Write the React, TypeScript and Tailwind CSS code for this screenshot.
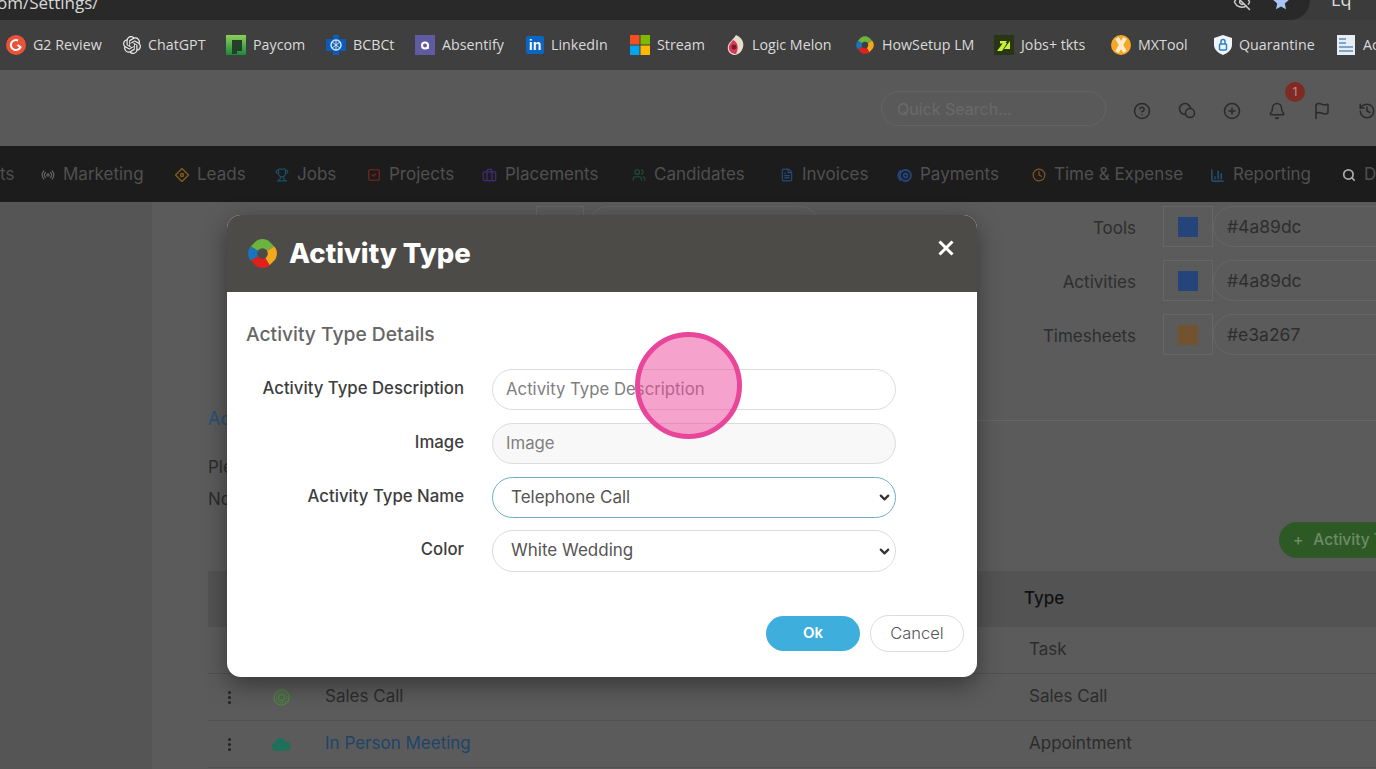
import { ReactNode } from "react"
import {
  BarChart3,
  Bell,
  Briefcase,
  CircleHelp,
  CirclePlus,
  Clock,
  EyeOff,
  FileText,
  Flag,
  History,
  Radio,
  Search,
  SquareCheck,
  Trophy,
  Users,
  ChevronDown,
} from "lucide-react"
import { SiOpenai } from "react-icons/si"

function SwirlLogo({ className, hole }: { className: string; hole: string }) {
  return (
    <svg viewBox="2 2 28 28" className={className}>
      <path d="M6 10 L10 6 C13 3 19 3 22 6 L26 10 L16 16Z" fill="#6cb33f" />
      <path d="M26 10 C29 13 29 19 26 22 L22 26 L16 16Z" fill="#f4a81d" />
      <path d="M22 26 C19 29 13 29 10 26 L6 22 L16 16Z" fill="#e0201c" />
      <path d="M6 22 C3 19 3 13 6 10 L16 16Z" fill="#1b75bc" />
      <circle cx="16" cy="16" r="4.500" fill={hole} />
    </svg>
  )
}

const bookmarks: { label: string; width: string; icon: ReactNode }[] = [
  {
    label: "G2 Review",
    width: "w-[117px]",
    icon: (
      <svg viewBox="0 0 20 20" className="h-5 w-5">
        <circle cx="10" cy="10" r="10" fill="#e8533a" />
        <path d="M12 5.500 A5 5 0 1 0 14.500 12 L11.500 10" fill="none" stroke="#fff" strokeWidth="2" />
      </svg>
    ),
  },
  {
    label: "ChatGPT",
    width: "w-[103px]",
    icon: <SiOpenai className="h-[18px] w-[18px] text-[#eee]" />,
  },
  {
    label: "Paycom",
    width: "w-[100px]",
    icon: (
      <svg viewBox="0 0 20 20" className="h-5 w-5">
        <defs>
          <linearGradient id="paycom" x1="0" y1="0" x2="0" y2="1">
            <stop offset="0" stopColor="#8fce5a" />
            <stop offset="1" stopColor="#1a8a3c" />
          </linearGradient>
        </defs>
        <rect width="20" height="20" fill="url(#paycom)" />
        <path d="M6 5 H16 V16 H11 V19 H6Z" fill="#24402a" />
      </svg>
    ),
  },
  {
    label: "BCBCt",
    width: "w-[89px]",
    icon: (
      <svg viewBox="0 0 20 20" className="h-5 w-5">
        <path d="M7 0 H13 V4 H20 V16 H13 V20 H7 V16 H0 V4 H7Z" fill="#0f5cb8" />
        <circle cx="10" cy="10" r="5" fill="none" stroke="#cfe2f8" strokeWidth="1.500" />
        <path d="M6 7 L14 13 M14 7 L6 13 M10 5 V15" stroke="#cfe2f8" strokeWidth="1" />
      </svg>
    ),
  },
  {
    label: "Absentify",
    width: "w-[111px]",
    icon: (
      <svg viewBox="0 0 20 20" className="h-5 w-5">
        <rect width="20" height="20" fill="#5f5aa2" />
        <circle cx="10" cy="10.500" r="3" fill="none" stroke="#fff" strokeWidth="2" />
        <path d="M13 9 V14" stroke="#fff" strokeWidth="1.500" />
      </svg>
    ),
  },
  {
    label: "LinkedIn",
    width: "w-[104px]",
    icon: (
      <div className="flex h-[18px] w-[18px] items-center justify-center rounded-[2px] bg-[#0a66c2] text-[14px] font-bold leading-none text-white [font-family:'Liberation_Sans',sans-serif]">
        in
      </div>
    ),
  },
  {
    label: "Stream",
    width: "w-[97px]",
    icon: (
      <svg viewBox="0 0 20 20" className="h-5 w-5">
        <rect width="9.500" height="9.500" fill="#f25022" />
        <rect x="10.500" width="9.500" height="9.500" fill="#7fba00" />
        <rect y="10.500" width="9.500" height="9.500" fill="#00a4ef" />
        <rect x="10.500" y="10.500" width="9.500" height="9.500" fill="#ffb900" />
      </svg>
    ),
  },
  {
    label: "Logic Melon",
    width: "w-[128px]",
    icon: (
      <svg viewBox="0 0 18 20" className="h-5 w-[18px]">
        <path d="M9 0 C16 3 18 9 15 15 C13 19 9 20 7 20 C2 19 0 15 1 11 C2 7 6 5 9 0Z" fill="#e8dcc8" />
        <path d="M6 5 C11 7 12 13 9 19 C4 19 1 15 2 11 C3 8 5 7 6 5Z" fill="#d8385a" />
        <circle cx="7" cy="12" r="2.500" fill="#7a1a30" />
      </svg>
    ),
  },
  {
    label: "HowSetup LM",
    width: "w-[139px]",
    icon: <SwirlLogo className="h-5 w-5" hole="#3f3f3f" />,
  },
  {
    label: "Jobs+ tkts",
    width: "w-[117px]",
    icon: (
      <svg viewBox="0 0 20 20" className="h-5 w-5">
        <rect width="20" height="20" fill="#2a3515" />
        <path d="M3 16 L9 8 H13 L8 16Z M10 14 L16 6 V14Z M6 6 H13 L11 8.500 H6Z" fill="#c6f135" />
      </svg>
    ),
  },
  {
    label: "MXTool",
    width: "w-[103px]",
    icon: (
      <svg viewBox="0 0 20 20" className="h-5 w-5">
        <circle cx="10" cy="10" r="10" fill="#f5a623" />
        <path d="M6 3 L14 17 M14 3 L6 17" stroke="#ffeacb" strokeWidth="4" />
      </svg>
    ),
  },
  {
    label: "Quarantine",
    width: "w-[122px]",
    icon: (
      <svg viewBox="0 0 18 20" className="h-5 w-[18px]">
        <path d="M9 0 L18 3 V10 C18 15 13 18.500 9 20 C5 18.500 0 15 0 10 V3Z" fill="#eef4fa" />
        <rect x="5.500" y="9" width="7" height="6" rx="1" fill="none" stroke="#2e7fc2" strokeWidth="1.500" />
        <path d="M7 9 V6.500 A2 2 0 0 1 11 6.500 V9" fill="none" stroke="#2e7fc2" strokeWidth="1.500" />
      </svg>
    ),
  },
  {
    label: "Ac",
    width: "w-[60px]",
    icon: (
      <svg viewBox="0 0 20 20" className="h-5 w-5">
        <rect x="1" width="18" height="20" fill="#e8edf3" />
        <path d="M3 4 H10 M3 8 H10 M3 12 H17 M3 16 H17" stroke="#5a8fc0" strokeWidth="1.500" />
      </svg>
    ),
  },
]

const navItems: { label: string; width: string; icon: ReactNode }[] = [
  { label: "Marketing", width: "w-[134px]", icon: <Radio className="h-[14px] w-[14px] text-[#666]" /> },
  {
    label: "Leads",
    width: "w-[100px]",
    icon: (
      <svg viewBox="0 0 14 14" className="h-[14px] w-[14px]" fill="none" stroke="#7e5a1c" strokeWidth="1.500">
        <path d="M7 0.500 L13.500 7 L7 13.500 L0.500 7Z" />
        <circle cx="7" cy="7" r="1.500" />
      </svg>
    ),
  },
  { label: "Jobs", width: "w-[92px]", icon: <Trophy className="h-[14px] w-[14px] text-[#1c4f68]" /> },
  { label: "Projects", width: "w-[115px]", icon: <SquareCheck className="h-[14px] w-[14px] text-[#80241c]" /> },
  { label: "Placements", width: "w-[150px]", icon: <Briefcase className="h-[15px] w-[15px] text-[#3f2f72]" /> },
  { label: "Candidates", width: "w-[148px]", icon: <Users className="h-[14px] w-[14px] text-[#1d4f3b]" /> },
  { label: "Invoices", width: "w-[117px]", icon: <FileText className="h-[14px] w-[14px] text-[#254a7c]" /> },
  {
    label: "Payments",
    width: "w-[135px]",
    icon: (
      <svg viewBox="0 0 15 15" className="h-[15px] w-[15px]" fill="none" stroke="#24467f" strokeWidth="1.800">
        <circle cx="8.500" cy="7.500" r="5.500" />
        <circle cx="8.500" cy="7.500" r="2" />
        <path d="M4 2.500 A6 6 0 0 0 4 12.500" />
      </svg>
    ),
  },
  { label: "Time & Expense", width: "w-[178px]", icon: <Clock className="h-[14px] w-[14px] text-[#8a5526]" /> },
  { label: "Reporting", width: "w-[132px]", icon: <BarChart3 className="h-[15px] w-[15px] text-[#245b8c]" /> },
  { label: "Dashboard", width: "w-[130px]", icon: <Search className="h-[14px] w-[14px] text-[#aaa]" strokeWidth={3} /> },
]

const colorRows = [
  { label: "Tools", hex: "#4a89dc", swatch: "bg-[#25457a]" },
  { label: "Activities", hex: "#4a89dc", swatch: "bg-[#25457a]" },
  { label: "Timesheets", hex: "#e3a267", swatch: "bg-[#73522f]" },
]

function TableRow({ icon, name, nameColor, type }: { icon: ReactNode; name: string; nameColor: string; type: string }) {
  return (
    <div className="flex h-[47px] items-center border-b border-[#505050] text-[17px] text-[#2c2c2c]">
      <div className="flex w-[42px] justify-center">
        <div className="flex flex-col gap-[2px]">
          <span className="h-[3px] w-[3px] rounded-full bg-[#222]" />
          <span className="h-[3px] w-[3px] rounded-full bg-[#222]" />
          <span className="h-[3px] w-[3px] rounded-full bg-[#222]" />
        </div>
      </div>
      <div className="flex w-[62px] justify-center">{icon}</div>
      <div className={`w-[704px] pl-[13px] ${nameColor}`}>{name}</div>
      <div className="pl-[13px]">{type}</div>
    </div>
  )
}

function FormRow({ label, className, children }: { label: string; className?: string; children: ReactNode }) {
  return (
    <div className={`flex items-center gap-[28px] ${className ?? ""}`}>
      <label className="w-[218px] -translate-y-px text-right text-[16.75px] font-medium text-[#3d3d3d]">{label}</label>
      {children}
    </div>
  )
}

function SelectBox({ value, focused, height }: { value: string; focused?: boolean; height: string }) {
  return (
    <div
      className={`flex w-[404px] items-center justify-between rounded-full border pl-[18px] pr-[3px] text-[17px] text-[#555] ${height} ${
        focused ? "border-[#6ab0c8]" : "border-[#dcdcdc]"
      }`}
    >
      <span>{value}</span>
      <ChevronDown className="h-[15px] w-[15px] text-[#333]" strokeWidth={3.5} />
    </div>
  )
}

export default function App() {
  return (
    <div className="relative h-[769px] w-[1376px] overflow-hidden bg-[#5b5b5b] [font-family:Inter,sans-serif]">
      {/* browser chrome */}
      <div className="flex h-[20px] items-start bg-[#3b3b3b] text-[#d8d8d8]">
        <div className="flex h-[20px] w-[1310px] items-start justify-between overflow-hidden rounded-br-[20px] bg-[#292929] pr-[21px]">
          <span className="-ml-[3px] -mt-[8px] text-[17px] leading-[22px] [font-family:'Open_Sans',sans-serif]">om/Settings/</span>
          <div className="flex items-start gap-[21px]">
            <EyeOff className="-mt-[7px] h-[18px] w-[20px] text-[#ccc]" />
            <svg viewBox="0 0 16 16" className="-mt-[6px] h-4 w-4">
              <path d="M8 0 L10.300 5.200 L16 5.800 L11.800 9.600 L13 15.300 L8 12.400 L3 15.300 L4.200 9.600 L0 5.800 L5.700 5.200Z" fill="#a8c4f8" />
            </svg>
          </div>
        </div>
        <span className="-mt-[12px] ml-[21px] text-[18px] leading-[22px] text-[#ddd] [font-family:'Open_Sans',sans-serif]">Lq</span>
      </div>
      <div className="flex h-[50px] items-center bg-[#3f3f3f] pl-[6px] text-[14.25px] text-[#dadada] [font-family:'Open_Sans',sans-serif]">
        {bookmarks.map((b) => (
          <div key={b.label} className={`flex shrink-0 items-center gap-[7px] ${b.width}`}>
            {b.icon}
            <span className="whitespace-nowrap">{b.label}</span>
          </div>
        ))}
      </div>

      {/* app header */}
      <div className="flex h-[76px] items-start justify-end bg-[#595959]">
        <div className="mt-[21px] flex h-[35px] w-[225px] items-center rounded-full border border-[#636363] pl-[15px] text-[16px] text-[#6a6a6a]">
          Quick Search...
        </div>
        <div className="relative ml-[27px] mt-[32px] flex items-center gap-[27px] text-[#2a2a2a]">
          <CircleHelp className="h-[18px] w-[18px]" />
          <svg viewBox="0 0 18 18" className="h-[18px] w-[18px]" fill="none" stroke="currentColor" strokeWidth="1.500">
            <circle cx="7" cy="7" r="5.500" fill="#595959" />
            <circle cx="12" cy="11" r="4.500" fill="#595959" />
          </svg>
          <CirclePlus className="h-[18px] w-[18px]" />
          <Bell className="h-[18px] w-[18px]" />
          <Flag className="h-[18px] w-[18px]" />
          <History className="h-[18px] w-[18px]" />
          <span className="absolute left-[152px] top-[-20px] flex h-5 w-5 items-center justify-center rounded-full bg-[#7f2a22] text-[12px] text-[#c98a84]">
            1
          </span>
        </div>
      </div>

      {/* main nav */}
      <div className="flex h-[56px] items-center overflow-hidden bg-[#1c1c1c] pt-[2px] text-[17px] text-[#505050]">
        <span className="w-[41px] shrink-0 pr-[31px] text-right">ts</span>
        {navItems.map((n) => (
          <div key={n.label} className={`flex shrink-0 items-center gap-[8px] ${n.width}`}>
            {n.icon}
            <span className="whitespace-nowrap">{n.label}</span>
          </div>
        ))}
      </div>

      {/* page behind the modal */}
      <div className="flex h-[567px]">
        <div className="w-[152px] shrink-0 border-r border-[#565656] bg-[#555555]" />
        <div className="min-w-0 flex-1 pl-[56px]">
          <div className="flex pt-[4px]">
            <div className="flex w-[752px] shrink-0 pl-[328px]">
              <div className="h-[41px] w-[48px] border border-[#666]" />
              <div className="ml-[4px] h-[41px] w-[232px] rounded-full border border-[#666]" />
            </div>
            <div className="flex flex-col gap-[13px]">
              {colorRows.map((r) => (
                <div key={r.label} className="flex h-[41px] items-center">
                  <span className="w-[176px] pt-[4px] text-right text-[17px] text-[#2e2e2e]">{r.label}</span>
                  <div className="ml-[27px] flex h-[41px] w-[50px] items-center justify-center border border-[#666]">
                    <div className={`h-5 w-5 ${r.swatch}`} />
                  </div>
                  <div className="flex h-[41px] w-[200px] items-center rounded-l-full border border-[#666] pl-[13px] pt-[2px] text-[17.5px] text-[#2e2e2e]">
                    {r.hex}
                  </div>
                </div>
              ))}
            </div>
          </div>

          <div className="mt-[52px] flex items-center text-[18px] text-[#2a4f78]">
            <span className="leading-[24px]">Activity Types</span>
            <div className="ml-[20px] mt-[2px] h-px flex-1 bg-[#666]" />
          </div>
          <p className="mt-[24px] text-[17px] leading-[24px] text-[#2c2c2c]">Please select a type</p>
          <p className="mt-[8px] text-[17px] leading-[24px] text-[#2c2c2c]">Note</p>

          <div className="mt-[11px] flex justify-end">
            <div className="flex h-[36px] w-[97px] items-center gap-[10px] whitespace-nowrap rounded-l-full bg-[#2d5a24] pl-[14px] text-[15.5px] font-medium text-[#6f8a68]">
              <span>+</span>
              <span>Activity Type</span>
            </div>
          </div>

          <div className="mt-[13px] flex h-[56px] items-center bg-[#535353] pl-[816px] text-[17px] font-medium text-[#111]">Type</div>
          <TableRow icon={null} name="Task" nameColor="text-[#2c2c2c]" type="Task" />
          <TableRow
            icon={
              <svg viewBox="0 0 18 18" className="h-[17px] w-[17px]" fill="none" stroke="#4a8a3c">
                <circle cx="9" cy="9" r="8" strokeWidth="1.400" />
                <circle cx="9" cy="9" r="5.500" strokeWidth="0.900" />
                <circle cx="9" cy="9" r="3" strokeWidth="1.400" />
              </svg>
            }
            name="Sales Call"
            nameColor="text-[#2c2c2c]"
            type="Sales Call"
          />
          <TableRow
            icon={
              <svg viewBox="0 0 20 14" className="h-[14px] w-5">
                <path d="M5 14 A4.500 4.500 0 0 1 4 5.200 A5.500 5.500 0 0 1 14.500 4.500 A4.800 4.800 0 0 1 15.500 14Z" fill="#1f6f5a" />
              </svg>
            }
            name="In Person Meeting"
            nameColor="text-[#1f4468]"
            type="Appointment"
          />
        </div>
      </div>

      {/* modal */}
      <div className="absolute left-[227px] top-[215px] h-[462px] w-[750px] overflow-hidden rounded-[14px] bg-white shadow-[0_8px_24px_rgba(0,0,0,0.4)]">
        <div className="flex h-[77px] items-center bg-[#4d4b48] pl-[19px] pr-[23px]">
          <SwirlLogo className="h-[33px] w-[33px]" hole="#4d4b48" />
          <h1 className="ml-[10px] text-[27.5px] font-extrabold text-white">Activity Type</h1>
          <svg viewBox="0 0 16 16" className="ml-auto h-4 w-4 -translate-y-[6px]" stroke="#fff" strokeWidth="3">
            <path d="M1.500 1.500 L14.500 14.500 M14.500 1.500 L1.500 14.500" />
          </svg>
        </div>
        <div className="px-[19px] pt-[30px]">
          <h2 className="text-[19.25px] font-medium leading-[24px] text-[#666]">Activity Type Details</h2>
          <div className="mt-[23px] flex flex-col gap-[13px]">
            <FormRow label="Activity Type Description">
              <div className="flex h-[41px] w-[404px] items-center rounded-full border border-[#dcdcdc] pl-[13px] text-[16.75px] text-[#808080]">
                Activity Type Description
              </div>
            </FormRow>
            <FormRow label="Image">
              <div className="flex h-[41px] w-[404px] items-center rounded-full border border-[#dcdcdc] bg-[#f8f8f8] pl-[13px] text-[16.75px] text-[#808080]">
                Image
              </div>
            </FormRow>
            <FormRow label="Activity Type Name">
              <SelectBox value="Telephone Call" focused height="h-[41px]" />
            </FormRow>
            <FormRow label="Color" className="-mt-px">
              <SelectBox value="White Wedding" height="h-[42px]" />
            </FormRow>
          </div>
          <div className="-mr-[6px] mt-[43px] flex items-center justify-end gap-[10px]">
            <button className="h-[35px] w-[94px] rounded-full bg-[#3eafdc] text-[15px] font-semibold text-white">Ok</button>
            <button className="h-[37px] w-[94px] rounded-full border border-[#dcdcdc] bg-white text-[16.5px] font-light text-[#555]">Cancel</button>
          </div>
        </div>
      </div>

      {/* click highlight */}
      <div className="absolute left-[635px] top-[332px] h-[107px] w-[107px] rounded-full border-[5px] border-[#e8459b] bg-[#ec4899]/50" />
    </div>
  )
}
